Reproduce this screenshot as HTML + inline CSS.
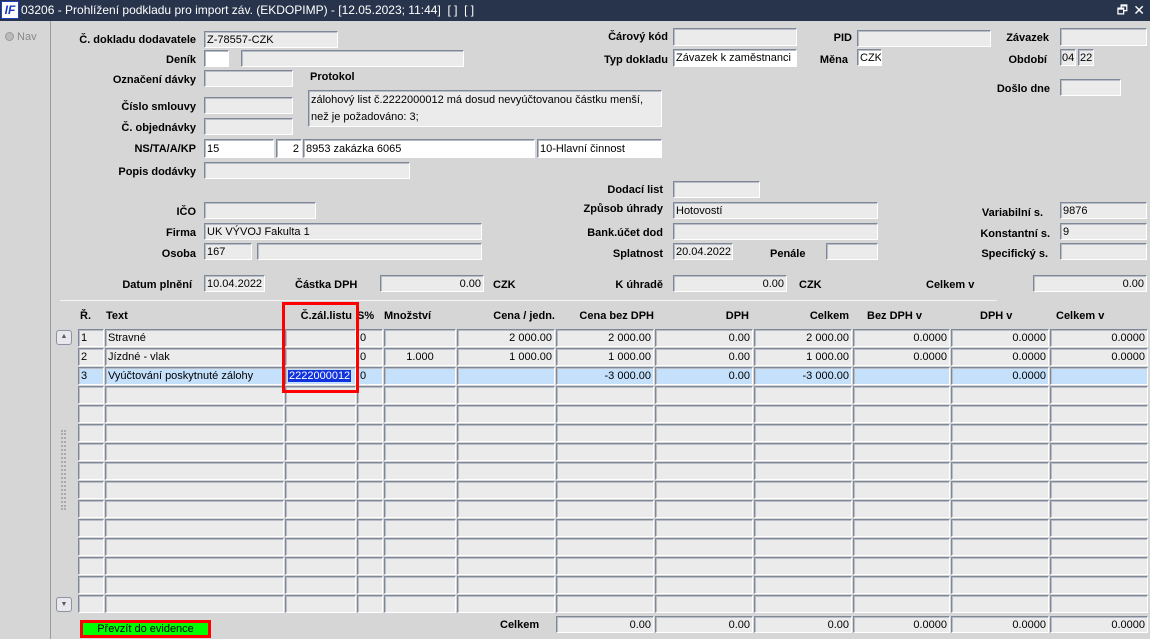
<!DOCTYPE html>
<html><head><meta charset="utf-8"><style>
*{box-sizing:border-box;margin:0;padding:0}
body{width:1150px;height:639px;overflow:hidden;background:#d6d6d6;font-family:"Liberation Sans",sans-serif;font-size:11px;color:#000;position:relative}
.tb{position:absolute;left:0;top:0;width:1150px;height:21px;background:#28344c;color:#fff;font-size:12px;line-height:21px}
.l{position:absolute;font-weight:bold;font-size:11px;white-space:nowrap}
.r{text-align:right}
.f{position:absolute;background:#ebebeb;border:1px solid;border-color:#7f8898 #fff #fff #7f8898;box-shadow:inset 1px 1px 0 #b8bcc4;padding:1px 2px 0;line-height:14px;white-space:nowrap;overflow:hidden;font-size:11px}
.w{background:#fff}
.n{text-align:right}
</style></head><body>
<div class="tb"><span style="position:absolute;left:1px;top:1px;width:18px;height:18px;background:#fff;border:1px solid #2040c0;color:#1a3cc0;font:italic bold 12px/16px 'Liberation Sans';text-align:center">IF</span><span style="position:absolute;left:21px">03206 - Prohlížení podkladu pro import záv. (EKDOPIMP) - [12.05.2023; 11:44]&nbsp; [ ]&nbsp; [ ]</span><span style="position:absolute;right:22px;top:0;font-size:12px">🗗</span><span style="position:absolute;right:5px;top:0;font-size:14px">✕</span></div>
<div style="position:absolute;left:50px;top:21px;width:1px;height:618px;background:#9a9a9a"></div>
<div style="position:absolute;left:5px;top:31px;color:#888;font-size:11px"><span style="display:inline-block;width:9px;height:9px;border-radius:50%;background:#bbb;border:1px solid #999;vertical-align:-1px"></span> Nav</div>

<div class="l r" style="right:954px;top:34px">Č. dokladu dodavatele</div>
<div class="f" style="left:204px;top:31px;width:134px;height:17px">Z-78557-CZK</div>
<div class="l r" style="right:954px;top:54px">Deník</div>
<div class="f w" style="left:204px;top:50px;width:25px;height:17px"></div>
<div class="f" style="left:241px;top:50px;width:223px;height:17px"></div>
<div class="l r" style="right:954px;top:74px">Označení dávky</div>
<div class="f" style="left:204px;top:70px;width:89px;height:17px"></div>
<div class="l" style="left:310px;top:71px">Protokol</div>
<div class="l r" style="right:954px;top:101px">Číslo smlouvy</div>
<div class="f" style="left:204px;top:97px;width:89px;height:17px"></div>
<div class="l r" style="right:954px;top:122px">Č. objednávky</div>
<div class="f" style="left:204px;top:118px;width:89px;height:17px"></div>
<div class="f" style="left:308px;top:90px;width:354px;height:37px;line-height:17px;padding-top:1px">zálohový list č.2222000012 má dosud nevyúčtovanou částku menší,<br>než je požadováno: 3;</div>
<div class="l r" style="right:954px;top:143px">NS/TA/A/KP</div>
<div class="f w" style="left:204px;top:139px;width:70px;height:19px;padding-top:2px">15</div>
<div class="f w n" style="left:276px;top:139px;width:26px;height:19px;padding-top:2px">2</div>
<div class="f w" style="left:303px;top:139px;width:232px;height:19px;padding-top:2px">8953 zakázka 6065</div>
<div class="f w" style="left:537px;top:139px;width:125px;height:19px;padding-top:2px">10-Hlavní činnost</div>
<div class="l r" style="right:954px;top:166px">Popis dodávky</div>
<div class="f" style="left:204px;top:162px;width:206px;height:17px"></div>

<div class="l r" style="right:482px;top:31px">Čárový kód</div>
<div class="f" style="left:673px;top:28px;width:124px;height:18px"></div>
<div class="l r" style="right:482px;top:54px">Typ dokladu</div>
<div class="f w" style="left:673px;top:49px;width:124px;height:18px">Závazek k zaměstnanci</div>
<div class="l r" style="right:298px;top:32px">PID</div>
<div class="f" style="left:857px;top:30px;width:134px;height:17px"></div>
<div class="l r" style="right:302px;top:54px">Měna</div>
<div class="f w" style="left:857px;top:49px;width:25px;height:17px">CZK</div>
<div class="l r" style="right:101px;top:32px">Závazek</div>
<div class="f" style="left:1060px;top:28px;width:87px;height:18px"></div>
<div class="l r" style="right:103px;top:54px">Období</div>
<div class="f" style="left:1060px;top:49px;width:16px;height:17px;padding:1px 1px 0">04</div>
<div class="f" style="left:1078px;top:49px;width:16px;height:17px;padding:1px 1px 0">22</div>
<div class="l r" style="right:100px;top:83px">Došlo dne</div>
<div class="f" style="left:1060px;top:79px;width:61px;height:17px"></div>

<div class="l r" style="right:487px;top:184px">Dodací list</div>
<div class="f" style="left:673px;top:181px;width:87px;height:17px"></div>
<div class="l r" style="right:954px;top:206px">IČO</div>
<div class="f" style="left:204px;top:202px;width:112px;height:17px"></div>
<div class="l r" style="right:487px;top:203px">Způsob úhrady</div>
<div class="f" style="left:673px;top:202px;width:205px;height:17px">Hotovostí</div>
<div class="l r" style="right:107px;top:207px">Variabilní s.</div>
<div class="f" style="left:1060px;top:202px;width:87px;height:17px">9876</div>
<div class="l r" style="right:954px;top:227px">Firma</div>
<div class="f" style="left:204px;top:223px;width:278px;height:17px">UK VÝVOJ Fakulta 1</div>
<div class="l r" style="right:487px;top:227px">Bank.účet dod</div>
<div class="f" style="left:673px;top:223px;width:205px;height:17px"></div>
<div class="l r" style="right:100px;top:228px">Konstantní s.</div>
<div class="f" style="left:1060px;top:223px;width:87px;height:17px">9</div>
<div class="l r" style="right:954px;top:248px">Osoba</div>
<div class="f" style="left:204px;top:243px;width:48px;height:17px">167</div>
<div class="f" style="left:257px;top:243px;width:225px;height:17px"></div>
<div class="l r" style="right:487px;top:248px">Splatnost</div>
<div class="f" style="left:673px;top:243px;width:60px;height:17px">20.04.2022</div>
<div class="l" style="left:770px;top:248px">Penále</div>
<div class="f" style="left:826px;top:243px;width:52px;height:17px"></div>
<div class="l r" style="right:102px;top:248px">Specifický s.</div>
<div class="f" style="left:1060px;top:243px;width:87px;height:17px"></div>

<div class="l r" style="right:958px;top:279px">Datum plnění</div>
<div class="f" style="left:204px;top:275px;width:61px;height:17px">10.04.2022</div>
<div class="l" style="left:295px;top:279px">Částka DPH</div>
<div class="f n" style="left:380px;top:275px;width:104px;height:17px">0.00</div>
<div class="l" style="left:493px;top:279px">CZK</div>
<div class="l r" style="right:487px;top:279px">K úhradě</div>
<div class="f n" style="left:673px;top:275px;width:114px;height:17px">0.00</div>
<div class="l" style="left:799px;top:279px">CZK</div>
<div class="l" style="left:926px;top:279px">Celkem v</div>
<div class="f n" style="left:1033px;top:275px;width:114px;height:17px">0.00</div>
<div style="position:absolute;left:60px;top:300px;width:937px;height:1px;background:#999;border-bottom:1px solid #f4f4f4"></div>

<div class="l" style="left:80px;top:310px">Ř.</div>
<div class="l" style="left:106px;top:310px">Text</div>
<div class="l r" style="right:798px;top:310px">Č.zál.listu</div>
<div class="l" style="left:357px;top:310px">S%</div>
<div class="l" style="left:384px;top:310px">Množství</div>
<div class="l r" style="right:595px;top:310px">Cena / jedn.</div>
<div class="l r" style="right:496px;top:310px">Cena bez DPH</div>
<div class="l r" style="right:401px;top:310px">DPH</div>
<div class="l r" style="right:301px;top:310px">Celkem</div>
<div class="l" style="left:867px;top:310px">Bez DPH v</div>
<div class="l" style="left:980px;top:310px">DPH v</div>
<div class="l" style="left:1056px;top:310px">Celkem v</div>

<div id="grid"></div>

<div style="position:absolute;left:56px;top:330px;width:16px;height:15px;border:1px solid #8a93a3;border-radius:3px;background:#e8e8ec;text-align:center;font-size:7px;line-height:12px;color:#556">▲</div>
<div style="position:absolute;left:56px;top:597px;width:16px;height:15px;border:1px solid #8a93a3;border-radius:3px;background:#e8e8ec;text-align:center;font-size:7px;line-height:14px;color:#556">▼</div>
<div style="position:absolute;left:61px;top:430px;width:5px;height:80px;border-left:2px dotted #aaa;border-right:2px dotted #aaa"></div>

<div style="position:absolute;left:282px;top:302px;width:77px;height:91px;border:3px solid #f00"></div>

<div style="position:absolute;left:80px;top:620px;width:131px;height:18px;border:3px solid #f00;background:#00ff00;text-align:center;line-height:12px;font-size:11px">Převzít do evidence</div>
<div class="l" style="left:500px;top:619px">Celkem</div>
<div class="f n" style="left:556px;top:616px;width:98px;height:17px">0.00</div>
<div class="f n" style="left:655px;top:616px;width:98px;height:17px">0.00</div>
<div class="f n" style="left:754px;top:616px;width:98px;height:17px">0.00</div>
<div class="f n" style="left:853px;top:616px;width:97px;height:17px">0.0000</div>
<div class="f n" style="left:951px;top:616px;width:98px;height:17px">0.0000</div>
<div class="f n" style="left:1050px;top:616px;width:98px;height:17px">0.0000</div>

<script>
var cols=[[78,26],[105,179],[285,71],[357,26],[384,72],[457,98],[556,98],[655,98],[754,98],[853,97],[951,98],[1050,98]];
var data=[
["1","Stravné","","0","","2 000.00","2 000.00","0.00","2 000.00","0.0000","0.0000","0.0000"],
["2","Jízdné - vlak","","0","1.000","1 000.00","1 000.00","0.00","1 000.00","0.0000","0.0000","0.0000"],
["3","Vyúčtování poskytnuté zálohy","2222000012","0","","","-3 000.00","0.00","-3 000.00","","0.0000",""]];
var g=document.getElementById('grid'),h='';
for(var r=0;r<15;r++){var y=329+r*19;for(var c=0;c<12;c++){var t=(data[r]||[])[c]||'';var al=(c>=5||c==4)?(c==4?'center':'right'):'left';var bg=r==2?'#c4e0fb':'#ebebeb';
if(r==2&&c==2)t='<span style="background:#1133dd;color:#fff;padding:0 1px">'+t+'</span>';
h+='<div class="f" style="left:'+cols[c][0]+'px;top:'+y+'px;width:'+cols[c][1]+'px;height:18px;line-height:15px;text-align:'+al+';background:'+bg+'">'+t+'</div>';}}
g.innerHTML=h;
</script>
</body></html>
